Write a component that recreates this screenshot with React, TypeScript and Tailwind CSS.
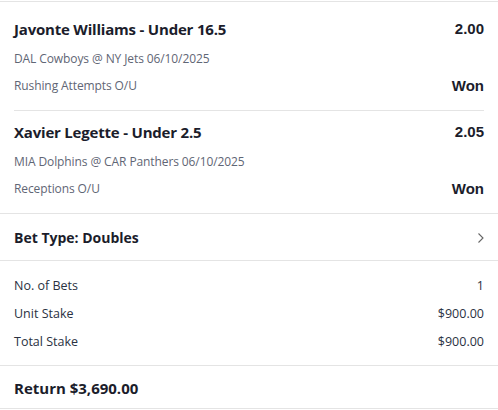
const legs = [
  {
    title: "Javonte Williams - Under 16.5",
    odds: "2.00",
    match: "DAL Cowboys @ NY Jets 06/10/2025",
    market: "Rushing Attempts O/U",
    result: "Won",
  },
  {
    title: "Xavier Legette - Under 2.5",
    odds: "2.05",
    match: "MIA Dolphins @ CAR Panthers 06/10/2025",
    market: "Receptions O/U",
    result: "Won",
  },
];

const stakes = [
  { label: "No. of Bets", value: "1" },
  { label: "Unit Stake", value: "$900.00" },
  { label: "Total Stake", value: "$900.00" },
];

export default function App() {
  return (
    <div className="w-[498px] h-[410px] bg-white overflow-hidden font-['Open_Sans',sans-serif] text-[#1b1d2b]">
      <div className="mt-px border-t border-[#e4e4e4]">
        {/* Bet legs */}
        <div className="px-[14px] pt-[6px]">
          {legs.map((leg, i) => (
            <div
              key={leg.title}
              className={`pt-[11px] pb-[14px] ${i < legs.length - 1 ? "border-b border-[#e4e4e4]" : ""}`}
            >
              <div className="flex items-center justify-between h-[20px]">
                <span className="text-[15px] font-bold tracking-[-0.2px]">{leg.title}</span>
                <span className="text-[15px] font-bold font-['Liberation_Sans',sans-serif]">{leg.odds}</span>
              </div>
              <div className="mt-[11px] h-[18px] flex items-center text-[12px] tracking-[-0.1px] text-[#5f6675]">
                {leg.match}
              </div>
              <div className="mt-[8px] h-[20px] flex items-center justify-between">
                <span className="text-[12px] tracking-[-0.1px] text-[#5f6675]">{leg.market}</span>
                <span className="text-[15px] font-bold font-['Liberation_Sans',sans-serif]">{leg.result}</span>
              </div>
            </div>
          ))}
        </div>

        {/* Bet type */}
        <div className="border-t border-[#e4e4e4] h-[47px] px-[14px] pt-px flex items-center justify-between">
          <span className="text-[14px] font-bold">Bet Type: Doubles</span>
          <svg width="8" height="12" viewBox="0 0 8 12" fill="none" className="-mr-[1px]">
            <path d="M1.5 1.5L6 6l-4.5 4.5" stroke="#666" strokeWidth="1.1" />
          </svg>
        </div>

        {/* Stakes */}
        <div className="border-t border-[#e4e4e4] px-[14px] pt-[11px] pb-[9px]">
          {stakes.map((s) => (
            <div key={s.label} className="h-[28px] flex items-center justify-between text-[12.5px] text-[#2a3142]">
              <span>{s.label}</span>
              <span>{s.value}</span>
            </div>
          ))}
        </div>

        {/* Return */}
        <div className="border-t border-b border-[#e4e4e4] h-[44px] px-[14px] flex items-center pt-[3px]">
          <span className="text-[15px] font-bold">Return $3,690.00</span>
        </div>
      </div>
    </div>
  );
}
